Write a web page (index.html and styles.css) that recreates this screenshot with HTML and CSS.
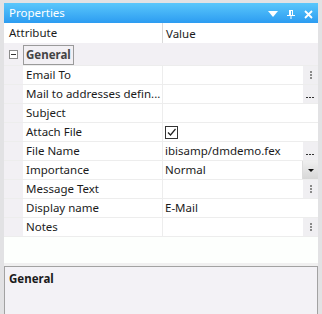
FILE: index.html
```html
<!DOCTYPE html>
<html lang="en">
<head>
    <meta charset="UTF-8">
    <title>Properties</title>
    <link rel="stylesheet" href="styles.css">
</head>
<body>
    <div class="frame">
        <div class="titlebar">
            <span class="title">Properties</span>
            <div class="tools">
                <svg width="10" height="6" viewBox="0 0 10 6"><polygon points="0,0 10,0 5,6" fill="#fff"/></svg>
                <svg width="8" height="9" viewBox="0 0 8 9"><path d="M2 0.5h4M2.5 0.5v5M5.5 0.5v5M0 5.5h8M4 5.5v3.5" stroke="#fff" stroke-width="1" fill="none"/><rect x="2" y="0" width="2" height="5" fill="#fff"/></svg>
                <svg width="9" height="9" viewBox="0 0 9 9"><path d="M1 1l7 7M8 1l-7 7" stroke="#fff" stroke-width="1.8"/></svg>
            </div>
        </div>

        <div class="grid">
            <div class="head">
                <div class="head-name">Attribute</div>
                <div class="head-value">Value</div>
            </div>
            <div class="cat">
                <span class="toggle"></span>
                <span class="cat-label">General</span>
            </div>

            <div class="row">
                <div class="gutter"></div>
                <div class="name">Email To</div>
                <div class="value"><span class="text"></span><span class="btn dots"></span></div>
            </div>
            <div class="row">
                <div class="gutter"></div>
                <div class="name">Mail to addresses defin...</div>
                <div class="value"><span class="text"></span><span class="btn ellipsis"></span></div>
            </div>
            <div class="row">
                <div class="gutter"></div>
                <div class="name">Subject</div>
                <div class="value"><span class="text"></span></div>
            </div>
            <div class="row">
                <div class="gutter"></div>
                <div class="name">Attach File</div>
                <div class="value">
                    <span class="check">
                        <svg width="11" height="11" viewBox="0 0 11 11"><path d="M2 5.5l2.5 2.5 5-6" stroke="#222" stroke-width="1.2" fill="none"/></svg>
                    </span>
                </div>
            </div>
            <div class="row">
                <div class="gutter"></div>
                <div class="name">File Name</div>
                <div class="value"><span class="text">ibisamp/dmdemo.fex</span><span class="btn ellipsis"></span></div>
            </div>
            <div class="row">
                <div class="gutter"></div>
                <div class="name">Importance</div>
                <div class="value"><span class="text">Normal</span><span class="btn drop"></span></div>
            </div>
            <div class="row">
                <div class="gutter"></div>
                <div class="name">Message Text</div>
                <div class="value"><span class="text"></span><span class="btn dots"></span></div>
            </div>
            <div class="row">
                <div class="gutter"></div>
                <div class="name">Display name</div>
                <div class="value"><span class="text">E-Mail</span></div>
            </div>
            <div class="row">
                <div class="gutter"></div>
                <div class="name">Notes</div>
                <div class="value"><span class="text"></span><span class="btn dots"></span></div>
            </div>
            <div class="empty"></div>
        </div>

        <div class="splitter"></div>
        <div class="desc">
            <div class="desc-title">General</div>
        </div>
    </div>
</body>
</html>
```

FILE: styles.css
```css
body {
    margin: 0;
    font-family: "Noto Sans", "Open Sans", sans-serif;
    font-size: 11.5px;
    color: #1b1b1b;
}
.frame {
    width: 322px;
    height: 314px;
    box-sizing: border-box;
    padding: 3px 4px 0 4px;
    background: #e2e2e4;
    display: flex;
    flex-direction: column;
}
.titlebar {
    height: 20px;
    background: linear-gradient(#5ac7fb, #2c9cf1);
    display: flex;
    align-items: center;
    justify-content: space-between;
    padding: 0 5px 0 5px;
    color: #fff;
}
.title {
    line-height: 20px;
}
.tools {
    display: flex;
    align-items: center;
    gap: 9px;
    padding-top: 2px;
}
.grid {
    background: #fff;
    display: flex;
    flex-direction: column;
}
.head {
    height: 20px;
    display: flex;
    align-items: center;
    background: #fff;
}
.head-name {
    width: 153px;
    padding-left: 5px;
    border-right: 1px solid #dadada;
    line-height: 20px;
}
.head-value {
    padding-left: 3px;
}
.cat {
    height: 22px;
    background: #f2f0f4;
    display: flex;
    align-items: center;
}
.toggle {
    width: 7px;
    height: 7px;
    border: 1px solid #8c8c8c;
    margin-left: 5px;
    margin-top: 1px;
    position: relative;
    background: #fff;
}
.toggle::after {
    content: "";
    position: absolute;
    left: 1px;
    top: 3px;
    width: 5px;
    height: 1px;
    background: #333;
}
.cat-label {
    margin-left: 5px;
    margin-top: 2px;
    padding: 0 2px;
    height: 18px;
    line-height: 18px;
    border: 1px solid #9a9a9a;
    font-weight: bold;
    color: #444;
}
.row {
    height: 18px;
    display: flex;
    border-top: 1px solid #ededed;
}
.gutter {
    width: 19px;
    background: #f2f0f4;
}
.name {
    width: 136px;
    padding-left: 3px;
    line-height: 18px;
    white-space: nowrap;
    border-right: 1px solid #ededed;
}
.value {
    flex: 1;
    display: flex;
    align-items: stretch;
}
.text {
    flex: 1;
    padding-left: 2px;
    line-height: 18px;
    white-space: nowrap;
}
.btn {
    width: 15px;
    background: #f0eff2;
    position: relative;
}
.dots::after {
    content: "";
    position: absolute;
    left: 7px;
    top: 5px;
    width: 2px;
    height: 2px;
    background: #8a8a8a;
    box-shadow: 0 3px 0 #8a8a8a, 0 6px 0 #8a8a8a;
}
.ellipsis::after {
    content: "";
    position: absolute;
    left: 3px;
    top: 12px;
    width: 2px;
    height: 1px;
    background: #333;
    box-shadow: 3px 0 0 #333, 6px 0 0 #333;
}
.drop {
    background: linear-gradient(#efefef, #d7d7d7);
    border-left: 1px solid #dcdcdc;
}
.drop::after {
    content: "";
    position: absolute;
    left: 5px;
    top: 8px;
    border-left: 3px solid transparent;
    border-right: 3px solid transparent;
    border-top: 3px solid #111;
}
.check {
    width: 11px;
    height: 11px;
    margin: 3px 0 0 2px;
    border: 1px solid #333;
    background: #fff;
    display: flex;
}
.empty {
    height: 26px;
    border-top: 1px solid #ededed;
    background: #fdfffd;
}
.splitter {
    height: 3px;
    background: #f0f0f0;
}
.desc {
    flex: 1;
    border: 1px solid #a2a2a2;
    border-bottom: none;
    background: #f3f2f6;
    padding: 4px 4px;
}
.desc-title {
    font-weight: bold;
}
```
